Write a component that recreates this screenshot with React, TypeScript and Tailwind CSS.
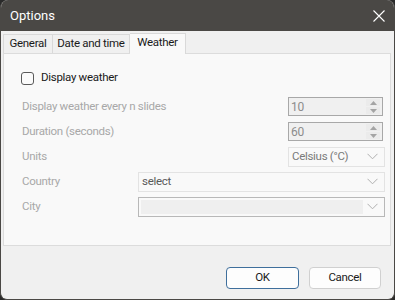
import React from 'react';

const Chevron = () => (
    <svg width="11" height="7" viewBox="0 0 11 7" className="shrink-0">
        <path d="M0.5 0.8 L5.5 5.8 L10.5 0.8" fill="none" stroke="#b0b0b0" strokeWidth="1" />
    </svg>
);

const Spin = ({ value }: { value: string }) => (
    <div className="flex h-[19px] w-[95px] items-center border border-[#a8a8a8] bg-[#f0f0f0]">
        <span className="flex-1 pl-[2px] text-[12px] leading-none text-[#8c8c8c]">{value}</span>
        <div className="mr-[2px] flex h-[15px] w-[14px] flex-col gap-[1px]">
            <div className="flex flex-1 items-center justify-center bg-[#ebebeb]">
                <svg width="7" height="4" viewBox="0 0 7 4"><path d="M0 4 L3.5 0 L7 4 Z" fill="#a4a4a4" /></svg>
            </div>
            <div className="flex flex-1 items-center justify-center bg-[#ebebeb]">
                <svg width="7" height="4" viewBox="0 0 7 4"><path d="M0 0 L3.5 4 L7 0 Z" fill="#a4a4a4" /></svg>
            </div>
        </div>
    </div>
);

const App = () => {
    return (
        <div
            className="w-[395px] h-[300px] bg-[#2a2a2a] overflow-hidden text-[11.5px] tracking-[-0.3px]"
            style={{ fontFamily: '"Segoe UI", Roboto, "Liberation Sans", sans-serif' }}
        >
            <div className="flex h-full flex-col overflow-hidden rounded-t-[8px] rounded-b-[7px] border-x border-b border-[#4a4845] bg-[#f0f0f0]">
                {/* Title bar */}
                <div className="flex h-[31px] shrink-0 items-center justify-between bg-[#4a4845] pl-[9px] pr-[9px]">
                    <span className="text-[13px] tracking-normal text-white">Options</span>
                    <svg width="12" height="12" viewBox="0 0 12 12">
                        <path d="M0.5 0.5 L11.5 11.5 M11.5 0.5 L0.5 11.5" stroke="#ffffff" strokeWidth="1.1" />
                    </svg>
                </div>

                {/* Body */}
                <div className="flex flex-1 flex-col pl-[2px] pr-[3px]">
                    {/* Tabs */}
                    <div className="flex h-[22px] items-end pt-[2px]">
                        <div className="flex h-[19px] w-[50px] items-center justify-center border border-b-0 border-[#d9d9d9] text-[#1a1a1a]">
                            General
                        </div>
                        <div className="flex h-[19px] w-[77px] items-center justify-center border-t border-r border-[#d9d9d9] text-[#1a1a1a]">
                            Date and time
                        </div>
                        <div className="relative top-[1px] flex h-[21px] w-[56px] items-center justify-center border-t border-r border-[#d9d9d9] bg-[#f9f9f9] pb-[2px] text-[#1a1a1a]">
                            Weather
                        </div>
                    </div>

                    {/* Panel */}
                    <div className="h-[193px] border border-[#dcdcdc] bg-[#f9f9f9] pl-[17px] pr-[5px] pt-[12px]">
                        <div className="flex h-[24px] items-center gap-[7px]">
                            <div className="h-[13px] w-[13px] rounded-[3px] border border-[#5a5a5a] bg-[#fbfbfb]" />
                            <span className="text-[#1a1a1a]">Display weather</span>
                        </div>
                        <div className="mt-[4px]">
                            <div className="flex h-[25px] items-center">
                                <span className="flex-1 pl-[1px] text-[#a8a8a8]">Display weather every n slides</span>
                                <div className="mr-[2px]"><Spin value="10" /></div>
                            </div>
                            <div className="flex h-[25px] items-center">
                                <span className="flex-1 pl-[1px] text-[#a8a8a8]">Duration (seconds)</span>
                                <div className="mr-[2px]"><Spin value="60" /></div>
                            </div>
                            <div className="flex h-[25px] items-center">
                                <span className="flex-1 pl-[1px] text-[#a8a8a8]">Units</span>
                                <div className="flex h-[20px] w-[97px] items-center border border-[#e3e3e3] bg-[#f9f9f9] pl-[3px] pr-[6px]">
                                    <span className="flex-1 text-[#7a7a7a]">Celsius (°C)</span>
                                    <Chevron />
                                </div>
                            </div>
                            <div className="flex h-[25px] items-center">
                                <span className="w-[117px] pl-[1px] text-[#a8a8a8]">Country</span>
                                <div className="flex h-[20px] flex-1 items-center border border-[#e3e3e3] bg-[#f9f9f9] pl-[3px] pr-[6px]">
                                    <span className="flex-1 text-[#595959]">select</span>
                                    <Chevron />
                                </div>
                            </div>
                            <div className="flex h-[25px] items-center">
                                <span className="w-[117px] pl-[1px] text-[#a8a8a8]">City</span>
                                <div className="flex h-[20px] flex-1 items-center gap-[4px] border border-[#b8b8b8] bg-[#f9f9f9] pl-[2px] pr-[6px]">
                                    <div className="h-[14px] flex-1 bg-[#efefef]" />
                                    <Chevron />
                                </div>
                            </div>
                        </div>
                    </div>

                    {/* Buttons */}
                    <div className="flex flex-1 items-center justify-end gap-[10px] pr-[10px] pt-[10px]">
                        <button className="h-[22px] w-[73px] rounded-[4px] border border-[#3f6f9c] bg-[#fdfdfd] text-[#1a1a1a]">
                            OK
                        </button>
                        <button className="h-[22px] w-[72px] rounded-[4px] border border-[#d0d0d0] bg-[#fdfdfd] text-[#1a1a1a]">
                            Cancel
                        </button>
                    </div>
                </div>
            </div>
        </div>
    );
};

export default App;
